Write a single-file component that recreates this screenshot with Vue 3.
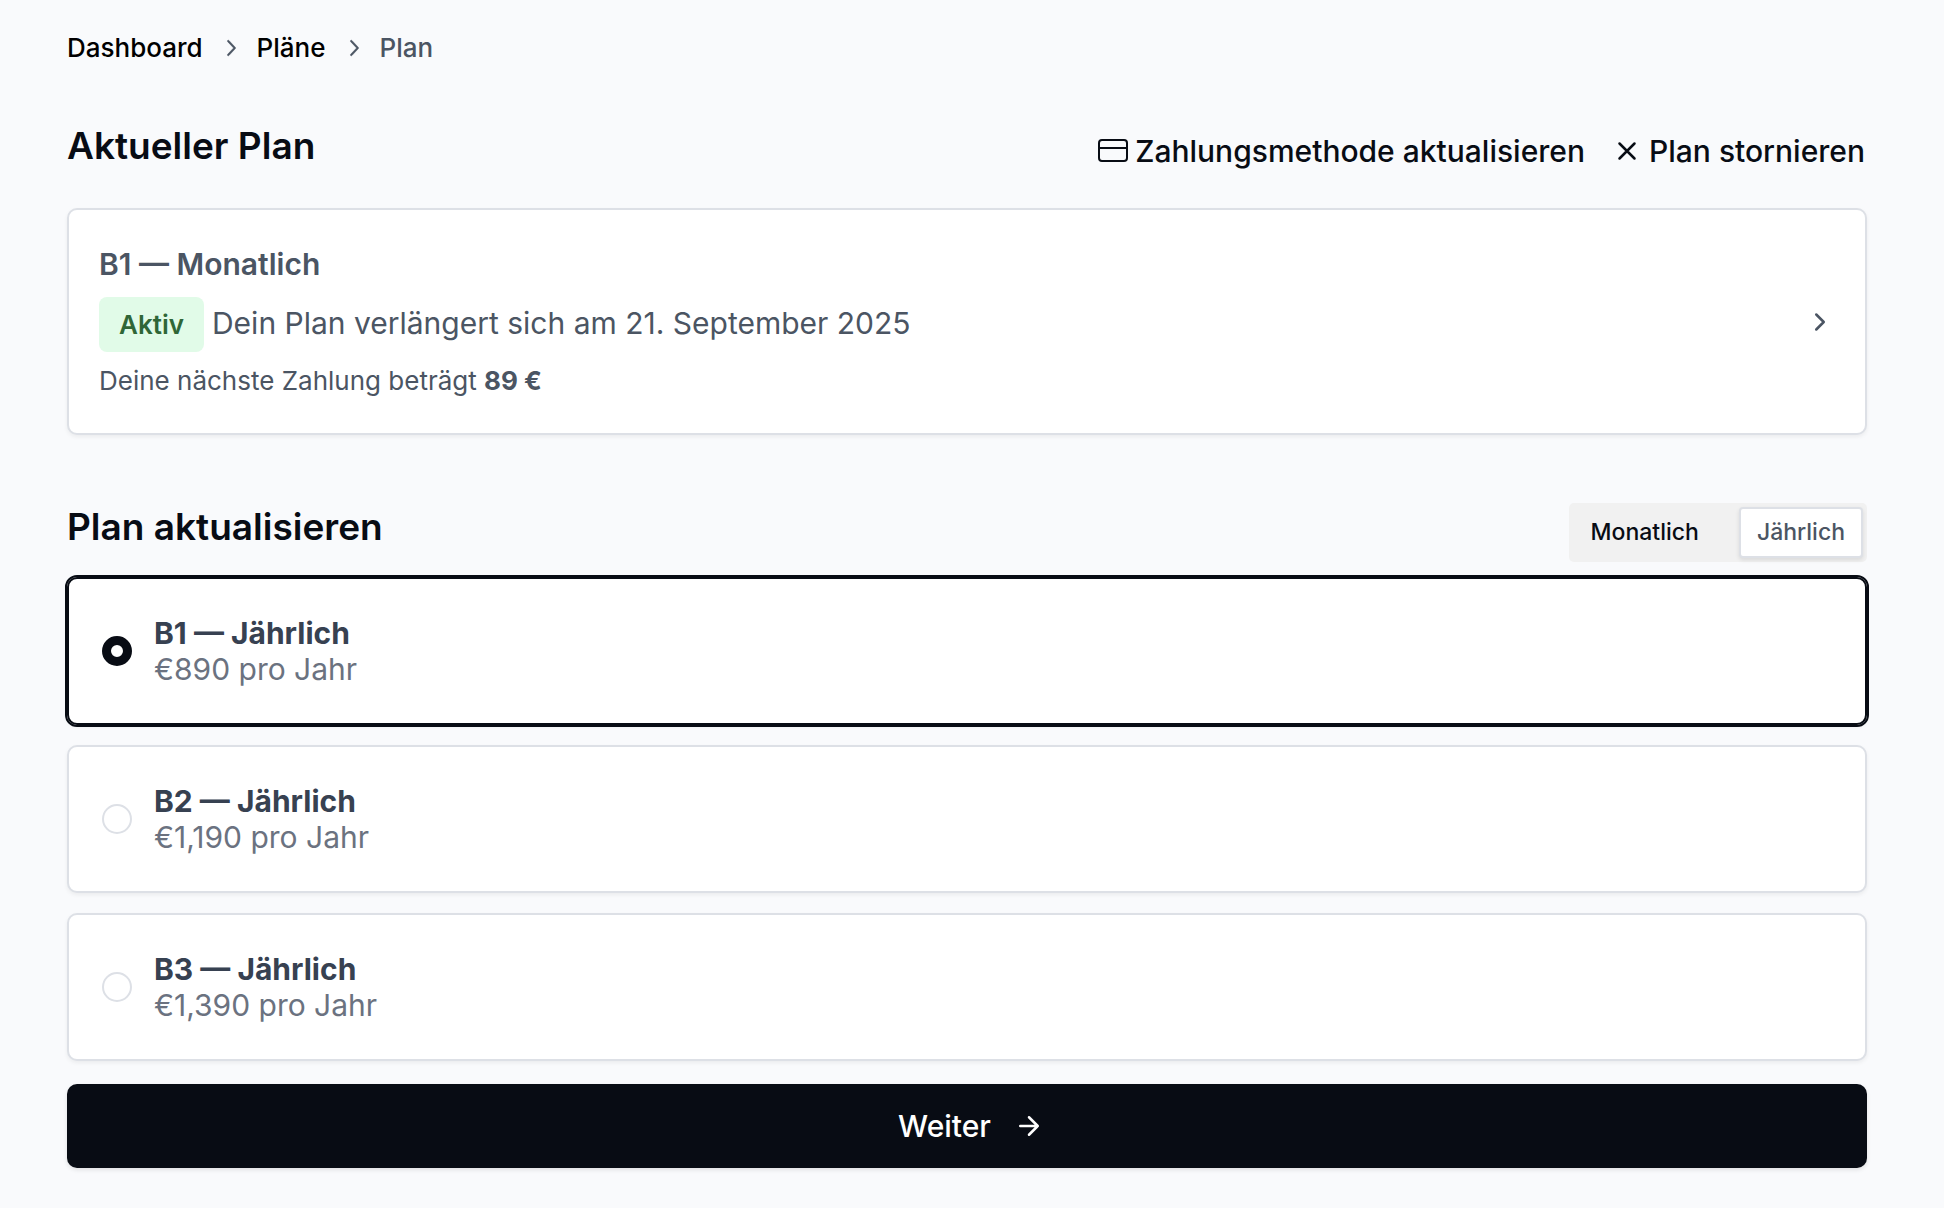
<script setup>
import { ref, computed } from 'vue'

const interval = ref('yearly')
const selected = ref('B1')

const plans = [
  { name: 'B1', monthly: '€89', yearly: '€890' },
  { name: 'B2', monthly: '€119', yearly: '€1,190' },
  { name: 'B3', monthly: '€139', yearly: '€1,390' },
]

const intervalLabel = computed(() => (interval.value === 'yearly' ? 'Jährlich' : 'Monatlich'))
const intervalUnit = computed(() => (interval.value === 'yearly' ? 'pro Jahr' : 'pro Monat'))
</script>

<template>
  <main class="page">
    <nav class="breadcrumb" aria-label="Breadcrumb">
      <a href="#dashboard">Dashboard</a>
      <svg class="crumb-icon" viewBox="0 0 15 15" aria-hidden="true">
        <path d="M6.1584 3.13508C6.35985 2.94621 6.67627 2.95642 6.86514 3.15788L10.6151 7.15788C10.7954 7.3502 10.7954 7.64949 10.6151 7.84182L6.86514 11.8418C6.67627 12.0433 6.35985 12.0535 6.1584 11.8646C5.95694 11.6757 5.94673 11.3593 6.1356 11.1579L9.565 7.49985L6.1356 3.84182C5.94673 3.64036 5.95694 3.32394 6.1584 3.13508Z" />
      </svg>
      <a href="#plans">Pläne</a>
      <svg class="crumb-icon" viewBox="0 0 15 15" aria-hidden="true">
        <path d="M6.1584 3.13508C6.35985 2.94621 6.67627 2.95642 6.86514 3.15788L10.6151 7.15788C10.7954 7.3502 10.7954 7.64949 10.6151 7.84182L6.86514 11.8418C6.67627 12.0433 6.35985 12.0535 6.1584 11.8646C5.95694 11.6757 5.94673 11.3593 6.1356 11.1579L9.565 7.49985L6.1356 3.84182C5.94673 3.64036 5.95694 3.32394 6.1584 3.13508Z" />
      </svg>
      <span aria-current="page">Plan</span>
    </nav>

    <header class="section-head current-head">
      <h2>Aktueller Plan</h2>
      <div class="actions">
        <button type="button" class="link-button">
          <svg class="icon" viewBox="0 0 30 30" aria-hidden="true">
            <rect x="1" y="4" width="28" height="21" rx="3" stroke-width="2" />
            <path d="M1 12h28" stroke-width="2" />
          </svg>
          Zahlungsmethode aktualisieren
        </button>
        <button type="button" class="link-button">
          <svg class="icon" viewBox="0 0 24 24" aria-hidden="true">
            <path d="M18 6 6 18M6 6l12 12" />
          </svg>
          Plan stornieren
        </button>
      </div>
    </header>

    <a href="#current-plan" class="card current">
      <div class="current-body">
        <h3>B1 — Monatlich</h3>
        <p class="status"><span class="badge">Aktiv</span>Dein Plan verlängert sich am 21. September 2025</p>
        <p class="payment">Deine nächste Zahlung beträgt <strong>89 €</strong></p>
      </div>
      <svg class="icon" viewBox="0 0 24 24" aria-hidden="true">
        <path d="m9 18 6-6-6-6" />
      </svg>
    </a>

    <header class="section-head update-head">
      <h2>Plan aktualisieren</h2>
      <div class="toggle" role="group" aria-label="Abrechnungszeitraum">
        <button type="button" :class="{ active: interval === 'monthly' }" @click="interval = 'monthly'">Monatlich</button>
        <button type="button" :class="{ active: interval === 'yearly' }" @click="interval = 'yearly'">Jährlich</button>
      </div>
    </header>

    <form @submit.prevent>
      <div class="options">
        <label
          v-for="plan in plans"
          :key="plan.name"
          class="card option"
          :class="{ selected: selected === plan.name }"
        >
          <input v-model="selected" type="radio" name="plan" :value="plan.name" />
          <span class="option-text">
            <strong>{{ plan.name }} — {{ intervalLabel }}</strong>
            <span>{{ plan[interval] }} {{ intervalUnit }}</span>
          </span>
        </label>
      </div>
      <button type="submit" class="submit">
        Weiter
        <svg class="icon" viewBox="0 0 24 24" aria-hidden="true">
          <path d="M5 12h14M12 5l7 7-7 7" />
        </svg>
      </button>
    </form>
  </main>
</template>

<style>
body {
  margin: 0;
  background: #f9fafc;
}
</style>

<style scoped>
.page {
  box-sizing: border-box;
  padding: 32px 77px 40px 67px;
  font-family: Inter, "Liberation Sans", sans-serif;
  font-size: 30px;
  line-height: 36px;
  color: #080c14;
}

h2,
h3,
p {
  margin: 0;
}

button {
  font: inherit;
  color: inherit;
  cursor: pointer;
}

.icon {
  flex: none;
  width: 30px;
  height: 30px;
  fill: none;
  stroke: currentColor;
  stroke-width: 2;
  stroke-linecap: round;
  stroke-linejoin: round;
}

.breadcrumb {
  display: flex;
  align-items: center;
  gap: 14px;
  font-size: 26px;
  line-height: 32px;
  font-weight: 500;
  color: #4b5563;
}

.breadcrumb a {
  color: #000;
  text-decoration: none;
}

.crumb-icon {
  width: 26px;
  height: 26px;
  fill: currentColor;
  stroke: currentColor;
  stroke-width: 0.3;
}

.section-head {
  display: flex;
  justify-content: space-between;
}

.current-head {
  margin-top: 58px;
  align-items: flex-end;
}

h2 {
  font-size: 37px;
  line-height: 48px;
  font-weight: 600;
}

.actions {
  display: flex;
  gap: 27px;
  padding: 0 2px 1px 0;
}

.link-button {
  display: flex;
  align-items: center;
  gap: 7px;
  padding: 0;
  border: 0;
  background: none;
  font-weight: 500;
}

.card {
  box-sizing: border-box;
  display: flex;
  align-items: center;
  border: 2px solid #dde0e6;
  border-radius: 10px;
  background: #fff;
  box-shadow: 0 2px 4px rgba(0, 0, 0, 0.06);
}

.current {
  justify-content: space-between;
  margin-top: 38px;
  padding: 36px 30px;
  color: #4b5563;
  text-decoration: none;
}

h3 {
  font-size: 30px;
  line-height: 36px;
  font-weight: 600;
}

.status {
  display: flex;
  align-items: baseline;
  gap: 8px;
  margin-top: 15px;
}

.badge {
  padding: 12px 20px;
  border-radius: 8px;
  background: #e1fbe8;
  color: #2f6637;
  font-size: 26px;
  line-height: 31px;
  font-weight: 600;
}

.payment {
  margin-top: 13px;
  font-size: 26px;
  line-height: 32px;
}

.payment strong {
  font-weight: 700;
}

.update-head {
  margin-top: 68px;
  align-items: flex-start;
}

.toggle {
  display: flex;
  gap: 22px;
  padding: 4px;
  border-radius: 5px;
  background: #f1f1f1;
}

.toggle button {
  padding: 10px 16px;
  border: 2px solid transparent;
  border-radius: 4px;
  background: none;
  font-size: 23px;
  line-height: 27px;
  font-weight: 500;
}

.toggle .active {
  border-color: #dde0e6;
  background: #fff;
  color: #4b5563;
  box-shadow: 0 2px 4px rgba(0, 0, 0, 0.1);
}

.options {
  display: flex;
  flex-direction: column;
  gap: 20px;
  margin-top: 15px;
}

.option {
  gap: 22px;
  padding: 36px 33px;
  cursor: pointer;
}

.option.selected {
  border-color: #080c14;
  outline: 2px solid #080c14;
}

.option input {
  appearance: none;
  flex: none;
  width: 30px;
  height: 30px;
  margin: 0;
  border: 2px solid #dde0e6;
  border-radius: 50%;
  background: #fff;
}

.option input:checked {
  border: 9px solid #080c14;
}

.option-text {
  display: flex;
  flex-direction: column;
  color: #6b7280;
}

.option-text strong {
  font-weight: 700;
  color: #374151;
}

.submit {
  display: flex;
  align-items: center;
  justify-content: center;
  gap: 23px;
  width: 100%;
  margin-top: 23px;
  padding: 24px 24px 24px 32px;
  border: 0;
  border-radius: 10px;
  background: #080c14;
  color: #fff;
  font-weight: 500;
  box-shadow: 0 2px 4px rgba(0, 0, 0, 0.1);
}
</style>
